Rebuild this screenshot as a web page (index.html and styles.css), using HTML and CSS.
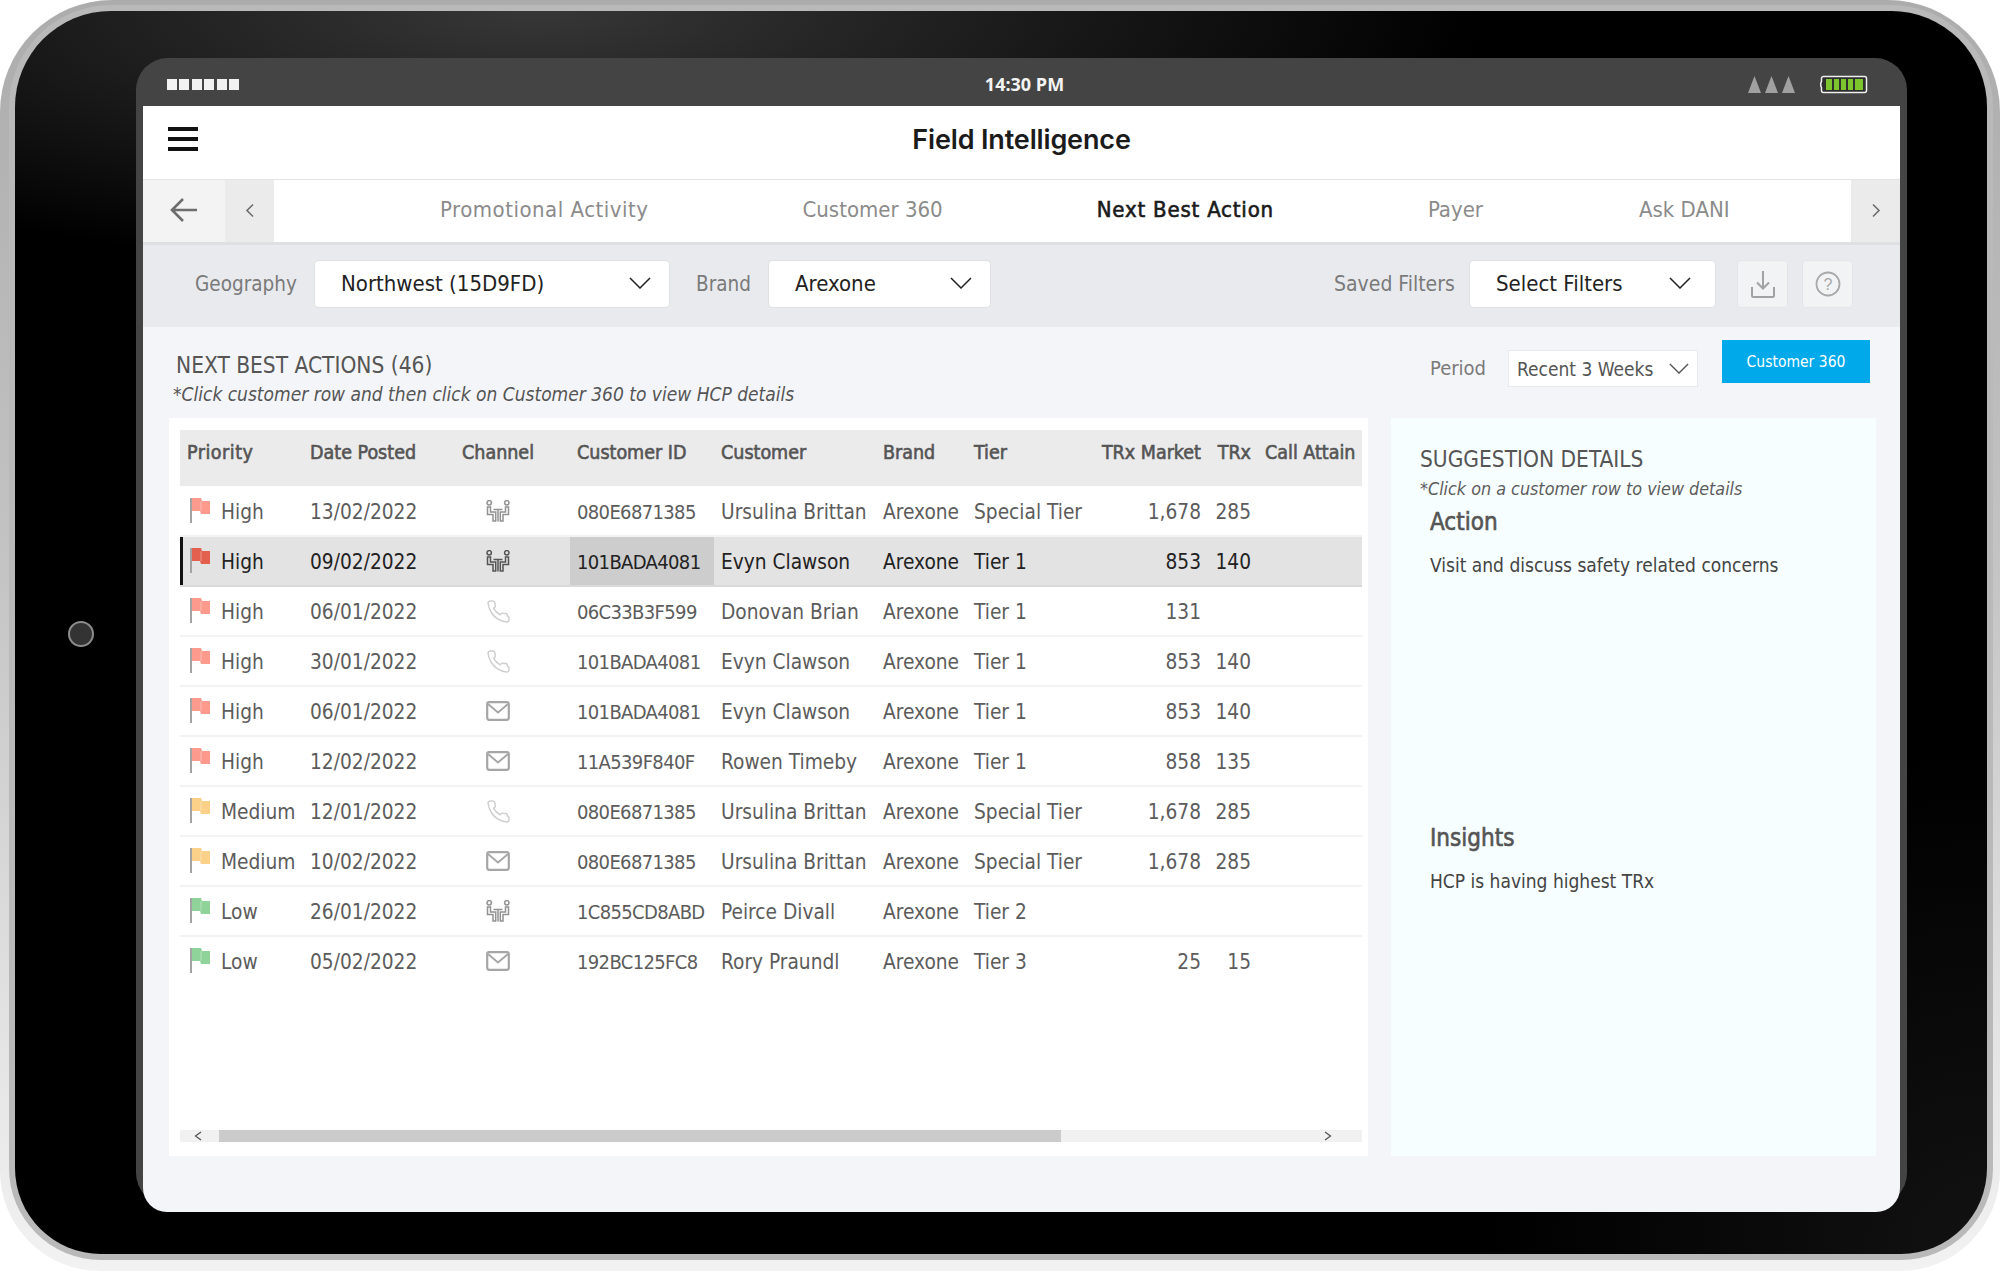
FILE: index.html
```html
<!DOCTYPE html>
<html lang="en">

<head>
    <meta charset="UTF-8">
    <title>Field Intelligence</title>
    <link rel="stylesheet" href="styles.css">
</head>

<body>
    <!-- Shared icons -->
    <svg class="icon-defs" width="0" height="0">
        <symbol id="flag" viewBox="0 0 22 28">
            <rect x="1" y="1" width="2" height="25" fill="#a3a3a3"></rect>
            <path d="M3 1h9l1 3h8v13h-9l-1-3H3z" fill="currentColor"></path>
            <path d="M12 4v10" stroke="#fff" stroke-opacity=".35" stroke-width="1"></path>
        </symbol>
        <symbol id="meet" viewBox="0 0 24 22">
            <g fill="none" stroke="currentColor" stroke-width="1.500">
                <circle cx="3.200" cy="2.800" r="2.200"></circle>
                <circle cx="20.800" cy="2.800" r="2.200"></circle>
                <path d="M1.500 7v7.500h5.500v6.500h2.700v-9H4.500V7z"></path>
                <path d="M22.500 7v7.500H17v6.500h-2.700v-9h5.200V7z"></path>
                <path d="M7.500 9.500h9M12 9.500v12"></path>
            </g>
        </symbol>
        <symbol id="phone" viewBox="0 0 24 24">
            <path fill="none" stroke="#cfcfcf" stroke-width="1.500" d="M23 18.500v2.400a2.200 2.200 0 0 1-2.400 2.100 20.500 20.500 0 0 1-9-3.200 20 20 0 0 1-6.300-6.300 20.500 20.500 0 0 1-3.200-9A2.200 2.200 0 0 1 4.300 2h2.400a2.200 2.200 0 0 1 2.200 1.900l.4 2.600a2.200 2.200 0 0 1-.6 1.900l-1 1a16.500 16.500 0 0 0 6.400 6.400l1-1a2.200 2.200 0 0 1 1.900-.6l2.600.4a2.200 2.200 0 0 1 1.900 2.300z"></path>
        </symbol>
        <symbol id="mail" viewBox="0 0 24 20">
            <rect x="1.200" y="1.200" width="21.600" height="17.600" rx="2" fill="none" stroke="#a6a6a6" stroke-width="2.200"></rect>
            <path d="M2 3l10 8.500L22 3" fill="none" stroke="#a6a6a6" stroke-width="1.800"></path>
        </symbol>
        <symbol id="chevron-down" viewBox="0 0 22 12">
            <path d="M1 1l10 10L21 1" fill="none" stroke="currentColor" stroke-width="1.500"></path>
        </symbol>
    </svg>

    <div class="device">
        <div class="camera"></div>
        <div class="bezel">
            <div class="shell">

                <div class="status-bar">
                    <div class="status-dots"><i></i><i></i><i></i><i></i><i></i><i></i></div>
                    <div class="status-time">14:30 PM</div>
                    <div class="status-right">
                        <svg class="signal" width="48" height="17" viewBox="0 0 48 17">
                            <path d="M0 17L6.500 0 13 17zM17 17L23.500 0 30 17zM34 17L40.500 0 47 17z" fill="#a0a0a0"></path>
                        </svg>
                        <svg class="battery" width="48" height="19" viewBox="0 0 48 19">
                            <path d="M3.500 1.500h41a2 2 0 0 1 2 2v12a2 2 0 0 1-2 2h-41a2 2 0 0 1-2-2v-3L0.800 11V8l.7-1.500v-3a2 2 0 0 1 2-2z" fill="#2e2e2e" stroke="#f0f0f0" stroke-width="1.500"></path>
                            <path d="M6 4h6v11H6zM14 4h5v11h-5zM21 4h5v11h-5zM28 4h5v11h-5zM35 4h8v11h-8z" fill="#7cc52c"></path>
                        </svg>
                    </div>
                </div>

                <div class="screen">
                    <header class="app-header">
                        <button class="menu-button"><i></i><i></i><i></i></button>
                        <h1>Field Intelligence</h1>
                    </header>

                    <nav class="tabs">
                        <div class="tab-back">
                            <svg width="30" height="26" viewBox="0 0 30 26">
                                <path d="M28 13H3M14 2L3 13l11 11" fill="none" stroke="#6d6d6d" stroke-width="2.600"></path>
                            </svg>
                        </div>
                        <div class="tab-arrow">
                            <svg width="10" height="15" viewBox="0 0 10 15">
                                <path d="M8 1.500L2 7.500l6 6" fill="none" stroke="#6d6d6d" stroke-width="1.600"></path>
                            </svg>
                        </div>
                        <div class="tab-list">
                            <a href="#" class="tab-wide">Promotional Activity</a>
                            <a href="#">Customer 360</a>
                            <a href="#" class="active">Next Best Action</a>
                            <a href="#">Payer</a>
                            <a href="#" class="tab-last">Ask DANI</a>
                        </div>
                        <div class="tab-arrow tab-next">
                            <svg width="10" height="15" viewBox="0 0 10 15">
                                <path d="M2 1.500l6 6-6 6" fill="none" stroke="#6d6d6d" stroke-width="1.600"></path>
                            </svg>
                        </div>
                    </nav>

                    <div class="filters">
                        <label class="geo-label">Geography</label>
                        <div class="select select-geo">Northwest (15D9FD)<svg width="22" height="12"><use href="#chevron-down"></use></svg></div>
                        <label class="brand-label">Brand</label>
                        <div class="select select-brand">Arexone<svg width="22" height="12"><use href="#chevron-down"></use></svg></div>
                        <label class="saved-label">Saved Filters</label>
                        <div class="select select-saved">Select Filters<svg width="22" height="12"><use href="#chevron-down"></use></svg></div>
                        <button class="tool-button">
                            <svg width="24" height="28" viewBox="0 0 24 28">
                                <path d="M12 1v17M6 12.500l6 6 6-6M1 17v8.500a1.500 1.500 0 0 0 1.500 1.500h19a1.500 1.500 0 0 0 1.500-1.500V17" fill="none" stroke="#a2a2a2" stroke-width="2"></path>
                            </svg>
                        </button>
                        <button class="tool-button help-button">
                            <svg width="26" height="26" viewBox="0 0 26 26">
                                <circle cx="13" cy="13" r="11.500" fill="none" stroke="#a8a8a8" stroke-width="1.800"></circle>
                                <text x="13" y="18.500" class="help-mark">?</text>
                            </svg>
                        </button>
                    </div>

                    <main class="content">
                        <div class="content-head">
                            <div class="content-title">
                                <h2>NEXT BEST ACTIONS (46)</h2>
                                <p>*Click customer row and then click on Customer 360 to view HCP details</p>
                            </div>
                            <label class="period-label">Period</label>
                            <div class="select select-period">Recent 3 Weeks<svg width="20" height="11"><use href="#chevron-down"></use></svg></div>
                            <button class="primary-button">Customer 360</button>
                        </div>

                        <div class="panels">
                            <section class="table-card">
                                <div class="table-scroll">
                                    <table>
                                        <colgroup>
                                            <col class="c-priority"><col class="c-date"><col class="c-channel"><col class="c-id"><col class="c-name"><col class="c-brand"><col class="c-tier"><col class="c-market"><col class="c-trx"><col class="c-call">
                                        </colgroup>
                                        <thead>
                                            <tr>
                                                <th>Priority</th>
                                                <th>Date Posted</th>
                                                <th>Channel</th>
                                                <th>Customer ID</th>
                                                <th>Customer</th>
                                                <th>Brand</th>
                                                <th>Tier</th>
                                                <th class="num">TRx Market</th>
                                                <th class="num">TRx</th>
                                                <th>Call Attain</th>
                                            </tr>
                                        </thead>
                                        <tbody>
                                            <tr>
                                                <td class="prio high"><svg width="22" height="28"><use href="#flag"></use></svg>High</td>
                                                <td>13/02/2022</td>
                                                <td class="chan meet"><svg width="24" height="22"><use href="#meet"></use></svg></td>
                                                <td class="cust-id">080E6871385</td>
                                                <td>Ursulina Brittan</td>
                                                <td>Arexone</td>
                                                <td>Special Tier</td>
                                                <td class="num">1,678</td>
                                                <td class="num">285</td>
                                                <td></td>
                                            </tr>
                                            <tr class="selected">
                                                <td class="prio high"><svg width="22" height="28"><use href="#flag"></use></svg>High</td>
                                                <td>09/02/2022</td>
                                                <td class="chan meet"><svg width="24" height="22"><use href="#meet"></use></svg></td>
                                                <td class="cust-id cell-active">101BADA4081</td>
                                                <td>Evyn Clawson</td>
                                                <td>Arexone</td>
                                                <td>Tier 1</td>
                                                <td class="num">853</td>
                                                <td class="num">140</td>
                                                <td></td>
                                            </tr>
                                            <tr>
                                                <td class="prio high"><svg width="22" height="28"><use href="#flag"></use></svg>High</td>
                                                <td>06/01/2022</td>
                                                <td class="chan"><svg width="24" height="24"><use href="#phone"></use></svg></td>
                                                <td class="cust-id">06C33B3F599</td>
                                                <td>Donovan Brian</td>
                                                <td>Arexone</td>
                                                <td>Tier 1</td>
                                                <td class="num">131</td>
                                                <td class="num"></td>
                                                <td></td>
                                            </tr>
                                            <tr>
                                                <td class="prio high"><svg width="22" height="28"><use href="#flag"></use></svg>High</td>
                                                <td>30/01/2022</td>
                                                <td class="chan"><svg width="24" height="24"><use href="#phone"></use></svg></td>
                                                <td class="cust-id">101BADA4081</td>
                                                <td>Evyn Clawson</td>
                                                <td>Arexone</td>
                                                <td>Tier 1</td>
                                                <td class="num">853</td>
                                                <td class="num">140</td>
                                                <td></td>
                                            </tr>
                                            <tr>
                                                <td class="prio high"><svg width="22" height="28"><use href="#flag"></use></svg>High</td>
                                                <td>06/01/2022</td>
                                                <td class="chan"><svg width="24" height="20"><use href="#mail"></use></svg></td>
                                                <td class="cust-id">101BADA4081</td>
                                                <td>Evyn Clawson</td>
                                                <td>Arexone</td>
                                                <td>Tier 1</td>
                                                <td class="num">853</td>
                                                <td class="num">140</td>
                                                <td></td>
                                            </tr>
                                            <tr>
                                                <td class="prio high"><svg width="22" height="28"><use href="#flag"></use></svg>High</td>
                                                <td>12/02/2022</td>
                                                <td class="chan"><svg width="24" height="20"><use href="#mail"></use></svg></td>
                                                <td class="cust-id">11A539F840F</td>
                                                <td>Rowen Timeby</td>
                                                <td>Arexone</td>
                                                <td>Tier 1</td>
                                                <td class="num">858</td>
                                                <td class="num">135</td>
                                                <td></td>
                                            </tr>
                                            <tr>
                                                <td class="prio medium"><svg width="22" height="28"><use href="#flag"></use></svg>Medium</td>
                                                <td>12/01/2022</td>
                                                <td class="chan"><svg width="24" height="24"><use href="#phone"></use></svg></td>
                                                <td class="cust-id">080E6871385</td>
                                                <td>Ursulina Brittan</td>
                                                <td>Arexone</td>
                                                <td>Special Tier</td>
                                                <td class="num">1,678</td>
                                                <td class="num">285</td>
                                                <td></td>
                                            </tr>
                                            <tr>
                                                <td class="prio medium"><svg width="22" height="28"><use href="#flag"></use></svg>Medium</td>
                                                <td>10/02/2022</td>
                                                <td class="chan"><svg width="24" height="20"><use href="#mail"></use></svg></td>
                                                <td class="cust-id">080E6871385</td>
                                                <td>Ursulina Brittan</td>
                                                <td>Arexone</td>
                                                <td>Special Tier</td>
                                                <td class="num">1,678</td>
                                                <td class="num">285</td>
                                                <td></td>
                                            </tr>
                                            <tr>
                                                <td class="prio low"><svg width="22" height="28"><use href="#flag"></use></svg>Low</td>
                                                <td>26/01/2022</td>
                                                <td class="chan meet"><svg width="24" height="22"><use href="#meet"></use></svg></td>
                                                <td class="cust-id">1C855CD8ABD</td>
                                                <td>Peirce Divall</td>
                                                <td>Arexone</td>
                                                <td>Tier 2</td>
                                                <td class="num"></td>
                                                <td class="num"></td>
                                                <td></td>
                                            </tr>
                                            <tr>
                                                <td class="prio low"><svg width="22" height="28"><use href="#flag"></use></svg>Low</td>
                                                <td>05/02/2022</td>
                                                <td class="chan"><svg width="24" height="20"><use href="#mail"></use></svg></td>
                                                <td class="cust-id">192BC125FC8</td>
                                                <td>Rory Praundl</td>
                                                <td>Arexone</td>
                                                <td>Tier 3</td>
                                                <td class="num">25</td>
                                                <td class="num">15</td>
                                                <td></td>
                                            </tr>
                                        </tbody>
                                    </table>
                                </div>
                                <div class="scrollbar">
                                    <div class="scroll-btn">
                                        <svg width="8" height="10" viewBox="0 0 8 10"><path d="M7 1L1.500 5 7 9" fill="none" stroke="#555" stroke-width="1.300"></path></svg>
                                    </div>
                                    <div class="scroll-thumb"></div>
                                    <div class="scroll-end">
                                        <svg width="8" height="10" viewBox="0 0 8 10"><path d="M1 1l5.500 4L1 9" fill="none" stroke="#555" stroke-width="1.300"></path></svg>
                                    </div>
                                </div>
                            </section>

                            <aside class="details-card">
                                <h2>SUGGESTION DETAILS</h2>
                                <p class="details-note">*Click on a customer row to view details</p>
                                <div class="details-block">
                                    <h3>Action</h3>
                                    <p>Visit and discuss safety related concerns</p>
                                </div>
                                <div class="details-block">
                                    <h3>Insights</h3>
                                    <p>HCP is having highest TRx</p>
                                </div>
                            </aside>
                        </div>
                    </main>
                </div>

            </div>
        </div>
    </div>
</body>

</html>
```

FILE: styles.css
```css
* {
    box-sizing: border-box;
}

html,
body {
    margin: 0;
    padding: 0;
    background-color: #fff;
}

body {
    font-family: "DejaVu Sans", sans-serif;
    font-stretch: condensed;
    color: #555;
}

h1,
h2,
h3,
p {
    margin: 0;
    font-weight: normal;
}

button {
    font-family: inherit;
    font-stretch: inherit;
    border: 0;
    padding: 0;
}

.icon-defs {
    position: absolute;
}

/* Tablet frame */
.device {
    position: relative;
    width: 2000px;
    height: 1271px;
    padding: 11px 13px 17px 15px;
    border-radius: 112px 112px 100px 100px;
    background: linear-gradient(#acacac 0, #c4c4c4 45%, #e6e6e6 85%, #f2f2f2 100%);
}

.bezel {
    height: 100%;
    padding: 47px 80px 49px 121px;
    border-radius: 96px 96px 86px 86px;
    background:
        radial-gradient(ellipse 950px 260px at 520px 0, #373737, rgba(55, 55, 55, 0)),
        radial-gradient(ellipse 500px 500px at 100% 100%, #121212, rgba(18, 18, 18, 0)),
        #000;
    box-shadow: 0 0 0 6px #b9b9b9;
}

.camera {
    position: absolute;
    left: 68px;
    top: 621px;
    width: 26px;
    height: 26px;
    border: 2px solid #8c8c8c;
    border-radius: 50%;
    background-color: #333;
}

.shell {
    height: 100%;
    padding: 0 7px;
    border-radius: 32px;
    background-color: #444;
}

/* Status bar */
.status-bar {
    display: flex;
    align-items: center;
    height: 48px;
    padding: 4px 32px 0 24px;
}

.status-dots {
    display: flex;
    gap: 2.400px;
    width: 300px;
}

.status-dots i {
    width: 10px;
    height: 11px;
    background-color: #f2f2f2;
}

.status-time {
    flex: 1;
    padding-left: 14px;
    text-align: center;
    font-family: "Open Sans", sans-serif;
    font-stretch: normal;
    font-size: 18px;
    font-weight: bold;
    color: #f4f4f4;
}

.status-right {
    display: flex;
    align-items: center;
    justify-content: flex-end;
    gap: 24px;
    width: 300px;
}

/* Screen */
.screen {
    height: 1106px;
    overflow: hidden;
    border-radius: 0 0 24px 24px;
    background-color: #f4f5f9;
}

.app-header {
    position: relative;
    display: flex;
    align-items: center;
    justify-content: center;
    height: 73px;
    padding-bottom: 7px;
    background-color: #fff;
}

.menu-button {
    position: absolute;
    left: 25px;
    top: 21px;
    display: flex;
    flex-direction: column;
    gap: 6px;
    width: 30px;
    background: none;
}

.menu-button i {
    height: 4px;
    background-color: #111;
}

.app-header h1 {
    font-family: "Inter", sans-serif;
    font-stretch: normal;
    font-size: 27px;
    font-weight: 600;
    letter-spacing: -0.150px;
    color: #1b1b1b;
}

.tabs {
    display: flex;
    height: 66px;
    border-top: 1px solid #e4e4e4;
    border-bottom: 3px solid #dfe0e3;
    background-color: #fff;
}

.tab-back,
.tab-arrow {
    display: flex;
    align-items: center;
    justify-content: center;
}

.tab-back {
    width: 82px;
    padding-bottom: 2px;
    background-color: #f3f3f3;
}

.tab-arrow {
    width: 49px;
    padding-bottom: 2px;
    background-color: #ebebec;
}

.tab-list {
    flex: 1;
    display: flex;
    align-items: center;
    gap: 154px;
    padding: 0 0 4px 166px;
}

.tab-list a {
    font-size: 22px;
    color: #8b8b8b;
    text-decoration: none;
}

.tab-list a.tab-wide {
    letter-spacing: 0.500px;
}

.tab-list a.tab-last {
    margin-left: 2px;
}

.tab-list a.active {
    color: #1a1a1a;
    letter-spacing: 0.800px;
    -webkit-text-stroke: 0.600px #1a1a1a;
}

/* Filters */
.filters {
    display: flex;
    align-items: center;
    height: 82px;
    padding-left: 52px;
    background-color: #e9eaee;
}

.filters label {
    padding-bottom: 5px;
    font-size: 20.500px;
    color: #7a7a7a;
}

.select {
    display: flex;
    align-items: center;
    justify-content: space-between;
    height: 48px;
    margin-bottom: 4px;
    padding: 0 18px 2px 26px;
    border: 1px solid #dfe0e3;
    border-radius: 4px;
    background-color: #fff;
    font-size: 22px;
    color: #222;
}

.geo-label {
    width: 119px;
}

.select-geo {
    width: 356px;
}

.brand-label {
    width: 72px;
    margin-left: 26px;
}

.select-brand {
    width: 223px;
}

.filters .saved-label {
    width: 135px;
    margin-left: 343px;
    font-size: 21px;
}

.select-saved {
    width: 247px;
    padding-right: 24px;
}

.tool-button {
    display: flex;
    align-items: center;
    justify-content: center;
    width: 51px;
    height: 48px;
    margin: 0 0 4px 21px;
    border: 1px solid #e4e5e8;
    border-radius: 4px;
    background-color: #f2f3f5;
}

.help-button {
    margin-left: 14px;
}

.help-mark {
    font-family: "Liberation Sans", sans-serif;
    font-size: 16px;
    text-anchor: middle;
    fill: #a8a8a8;
}

/* Content */
.content {
    padding: 13px 30px 0 26px;
}

.content-head {
    display: flex;
    height: 78px;
}

.content-title {
    flex: 1;
    padding-top: 11px;
}

.content-title h2,
.details-card h2 {
    font-size: 22.500px;
    color: #555;
}

.content-title h2 {
    padding-left: 7px;
    line-height: 28px;
}

.content-title p {
    padding-left: 4px;
    line-height: 30px;
    font-size: 19px;
    font-style: italic;
    color: #555;
}

.period-label {
    width: 78px;
    padding-top: 16px;
    font-size: 20px;
    color: #7a7a7a;
}

.select-period {
    width: 190px;
    height: 37px;
    margin: 10px 0 0;
    padding: 0 8px;
    border: 1px solid #e8e9ec;
    border-radius: 0;
    font-size: 19px;
    color: #555;
}

.primary-button {
    width: 148px;
    height: 43px;
    margin-left: 24px;
    background-color: #00a9ea;
    color: #fff;
    font-size: 15.500px;
}

.panels {
    display: flex;
    gap: 23px;
}

/* Table */
.table-card {
    flex: none;
    width: 1199px;
    height: 738px;
    padding: 12px 6px 0 11px;
    background-color: #fff;
}

.table-scroll {
    height: 688px;
    overflow: hidden;
}

table {
    width: 1220px;
    table-layout: fixed;
    border-collapse: collapse;
}

.c-priority { width: 123px; }
.c-date { width: 152px; }
.c-channel { width: 115px; }
.c-id { width: 144px; }
.c-name { width: 162px; }
.c-brand { width: 91px; }
.c-tier { width: 123px; }
.c-market { width: 118px; }
.c-trx { width: 50px; }
.c-call { width: 142px; }

th {
    height: 56px;
    padding: 0 7px 12px;
    background-color: #ebebeb;
    text-align: left;
    font-size: 19.500px;
    font-weight: normal;
    white-space: nowrap;
    color: #555;
    -webkit-text-stroke: 0.600px #555;
}

th:first-child {
    letter-spacing: 0.500px;
}

td {
    height: 50px;
    padding: 2px 7px 0;
    border-bottom: 2px solid #f3f3f3;
    font-size: 20.700px;
    white-space: nowrap;
    color: #5c5c5c;
}

tbody tr:last-child td {
    border-bottom-color: transparent;
}

td.cust-id {
    font-size: 20px;
    letter-spacing: -0.650px;
}

th.num,
td.num {
    text-align: right;
}

.prio svg {
    margin: 0 10px 4px 9px;
    vertical-align: middle;
}

.prio {
    padding: 4px 0 0;
}

.high {
    color: #5c5c5c;
}

.high svg {
    color: #fb9a8d;
}

.medium svg {
    color: #fbd088;
}

.low svg {
    color: #8fd39b;
}

.chan {
    padding: 0 0 0 31px;
}

.chan svg {
    display: block;
}

.meet svg {
    color: #929292;
}

tr.selected td {
    border-bottom-color: #d9d9d9;
    background-color: #e3e3e3;
    color: #222;
}

tr.selected .prio {
    box-shadow: inset 3px 0 0 #111;
}

tr.selected .high svg {
    color: #e3604e;
}

tr.selected .meet svg {
    color: #555;
}

tr.selected td.cell-active {
    background-color: #cdcdcd;
}

.scrollbar {
    display: flex;
    align-items: center;
    height: 12px;
    margin-top: 12px;
    background-color: #f1f1f1;
}

.scroll-btn {
    width: 39px;
    padding-left: 14px;
    line-height: 0;
}

.scroll-thumb {
    width: 842px;
    height: 12px;
    background-color: #cbcbcb;
}

.scroll-end {
    flex: 1;
    padding-left: 263px;
    line-height: 0;
}

/* Details */
.details-card {
    flex: none;
    width: 485px;
    height: 738px;
    padding: 28px 29px 0;
    background-color: #f7feff;
}

.details-note {
    margin-top: 6px;
    font-size: 17.800px;
    font-style: italic;
    color: #5c5c5c;
}

.details-block {
    height: 307px;
    padding-left: 10px;
    margin-top: 9px;
}

.details-block h3 {
    font-size: 24px;
    font-weight: normal;
    color: #555;
    -webkit-text-stroke: 0.600px #555;
}

.details-block p {
    margin-top: 18px;
    font-size: 19px;
    color: #444;
}
```
